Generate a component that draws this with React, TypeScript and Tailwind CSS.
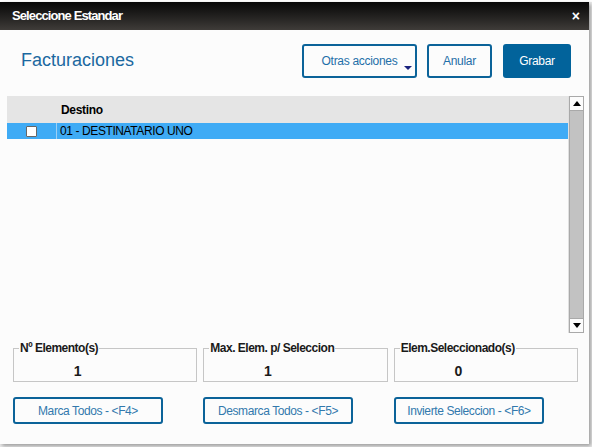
import React from 'react';

const font = { fontFamily: '"Liberation Sans", Arial, sans-serif' };

const Stat: React.FC<{ label: string; value: string }> = ({ label, value }) => (
  <fieldset className="flex-1 border border-[#c6c6c6] pl-[5px] pr-0 pb-[4px] pt-0 h-[40px] -mt-[6px]">
    <legend className="px-[1px] whitespace-nowrap text-[12px] font-bold leading-[13px] tracking-[-0.5px] text-[#1a1a1a]">{label}</legend>
    <div className="mr-[60px] text-center text-[14px] font-bold leading-[16px] mt-[8px] text-[#1a1a1a]">{value}</div>
  </fieldset>
);

const OutlineBtn: React.FC<{ children: React.ReactNode; className?: string }> = ({ children, className }) => (
  <button className={`h-[27px] w-[150px] rounded-[3px] border-2 border-[#0b6399] bg-[#fcfcfc] text-[12px] tracking-[-0.4px] text-[#3279ad] ${className ?? ''}`}>
    {children}
  </button>
);

export default function App() {
  return (
    <div className="w-[592px] h-[447px] bg-[#ececec] overflow-hidden" style={font}>
      <div className="h-[2px] bg-white" />
      <div className="w-[589px] h-[442px] flex flex-col bg-[#fcfcfc] shadow-[2px_2px_4px_rgba(0,0,0,0.35)]">
        {/* title bar */}
        <div className="h-[28px] flex items-center justify-between pl-[12px] pr-[9px] bg-gradient-to-b from-[#080808] to-[#3f3c39]">
          <span className="text-white text-[13px] font-bold tracking-[-0.9px]">Seleccione Estandar</span>
          <span className="text-white text-[14px] font-bold leading-none">×</span>
        </div>

        {/* header */}
        <div className="flex items-center justify-between pt-[14px] pl-[21px] pr-[18px]">
          <h1 className="text-[18px] text-[#1b68a0] leading-none -mt-[2px]">Facturaciones</h1>
          <div className="flex gap-[10px]">
            <button className="relative h-[34px] w-[115px] rounded-[3px] border-2 border-[#0b6399] bg-[#fcfcfc] text-[12px] tracking-[-0.3px] text-[#1f6fa8]">
              Otras acciones
              <span className="absolute right-[3px] bottom-[6px] w-0 h-0 border-l-[4px] border-r-[4px] border-t-[4px] border-l-transparent border-r-transparent border-t-[#1a237e]" />
            </button>
            <button className="h-[34px] w-[65px] rounded-[3px] border-2 border-[#0b6399] bg-[#fcfcfc] text-[12px] tracking-[-0.3px] text-[#1f6fa8]">
              Anular
            </button>
            <button className="h-[34px] w-[68px] ml-[1px] rounded-[3px] bg-[#02639b] text-[12px] tracking-[-0.3px] text-white">
              Grabar
            </button>
          </div>
        </div>

        {/* table */}
        <div className="flex mt-[18px] ml-[7px] mr-[5px] h-[237px]">
          <div className="flex-1 flex flex-col">
            <div className="h-[27px] flex items-center bg-[#e5e5e5]">
              <div className="w-[54px]" />
              <span className="text-[12px] font-bold tracking-[-0.3px] text-black">Destino</span>
            </div>
            <div className="h-[16px] flex items-center bg-[#3fabf5]">
              <div className="w-[50px] h-full flex items-center justify-center border-r border-[#9ccff5]">
                <span className="w-[11px] h-[11px] bg-white border border-[#666] rounded-[1px]" />
              </div>
              <span className="ml-[3px] text-[12px] tracking-[-0.4px] text-black">01 - DESTINATARIO UNO</span>
            </div>
          </div>
          <div className="w-[16px] flex flex-col border-l border-[#e0e0e0]">
            <div className="h-[15px] flex items-center justify-center border border-[#a9a9a9] bg-[#fcfcfc]">
              <span className="w-0 h-0 border-l-[4px] border-r-[4px] border-b-[5px] border-l-transparent border-r-transparent border-b-black" />
            </div>
            <div className="flex-1 bg-[#c2c2c2] border-x border-[#a9a9a9]" />
            <div className="h-[15px] flex items-center justify-center border border-[#a9a9a9] bg-[#fcfcfc]">
              <span className="w-0 h-0 border-l-[4px] border-r-[4px] border-t-[5px] border-l-transparent border-r-transparent border-t-black" />
            </div>
          </div>
        </div>

        {/* stats */}
        <div className="flex gap-[6px] mt-[15px] ml-[13px] mr-[11px]">
          <Stat label="Nº Elemento(s)" value="1" />
          <Stat label="Max. Elem. p/ Seleccion" value="1" />
          <Stat label="Elem.Seleccionado(s)" value="0" />
        </div>

        {/* actions */}
        <div className="flex mt-[15px] ml-[13px]">
          <OutlineBtn>Marca Todos - &lt;F4&gt;</OutlineBtn>
          <OutlineBtn className="ml-[40px]">Desmarca Todos - &lt;F5&gt;</OutlineBtn>
          <OutlineBtn className="ml-[41px]">Invierte Seleccion - &lt;F6&gt;</OutlineBtn>
        </div>
      </div>
    </div>
  );
}
